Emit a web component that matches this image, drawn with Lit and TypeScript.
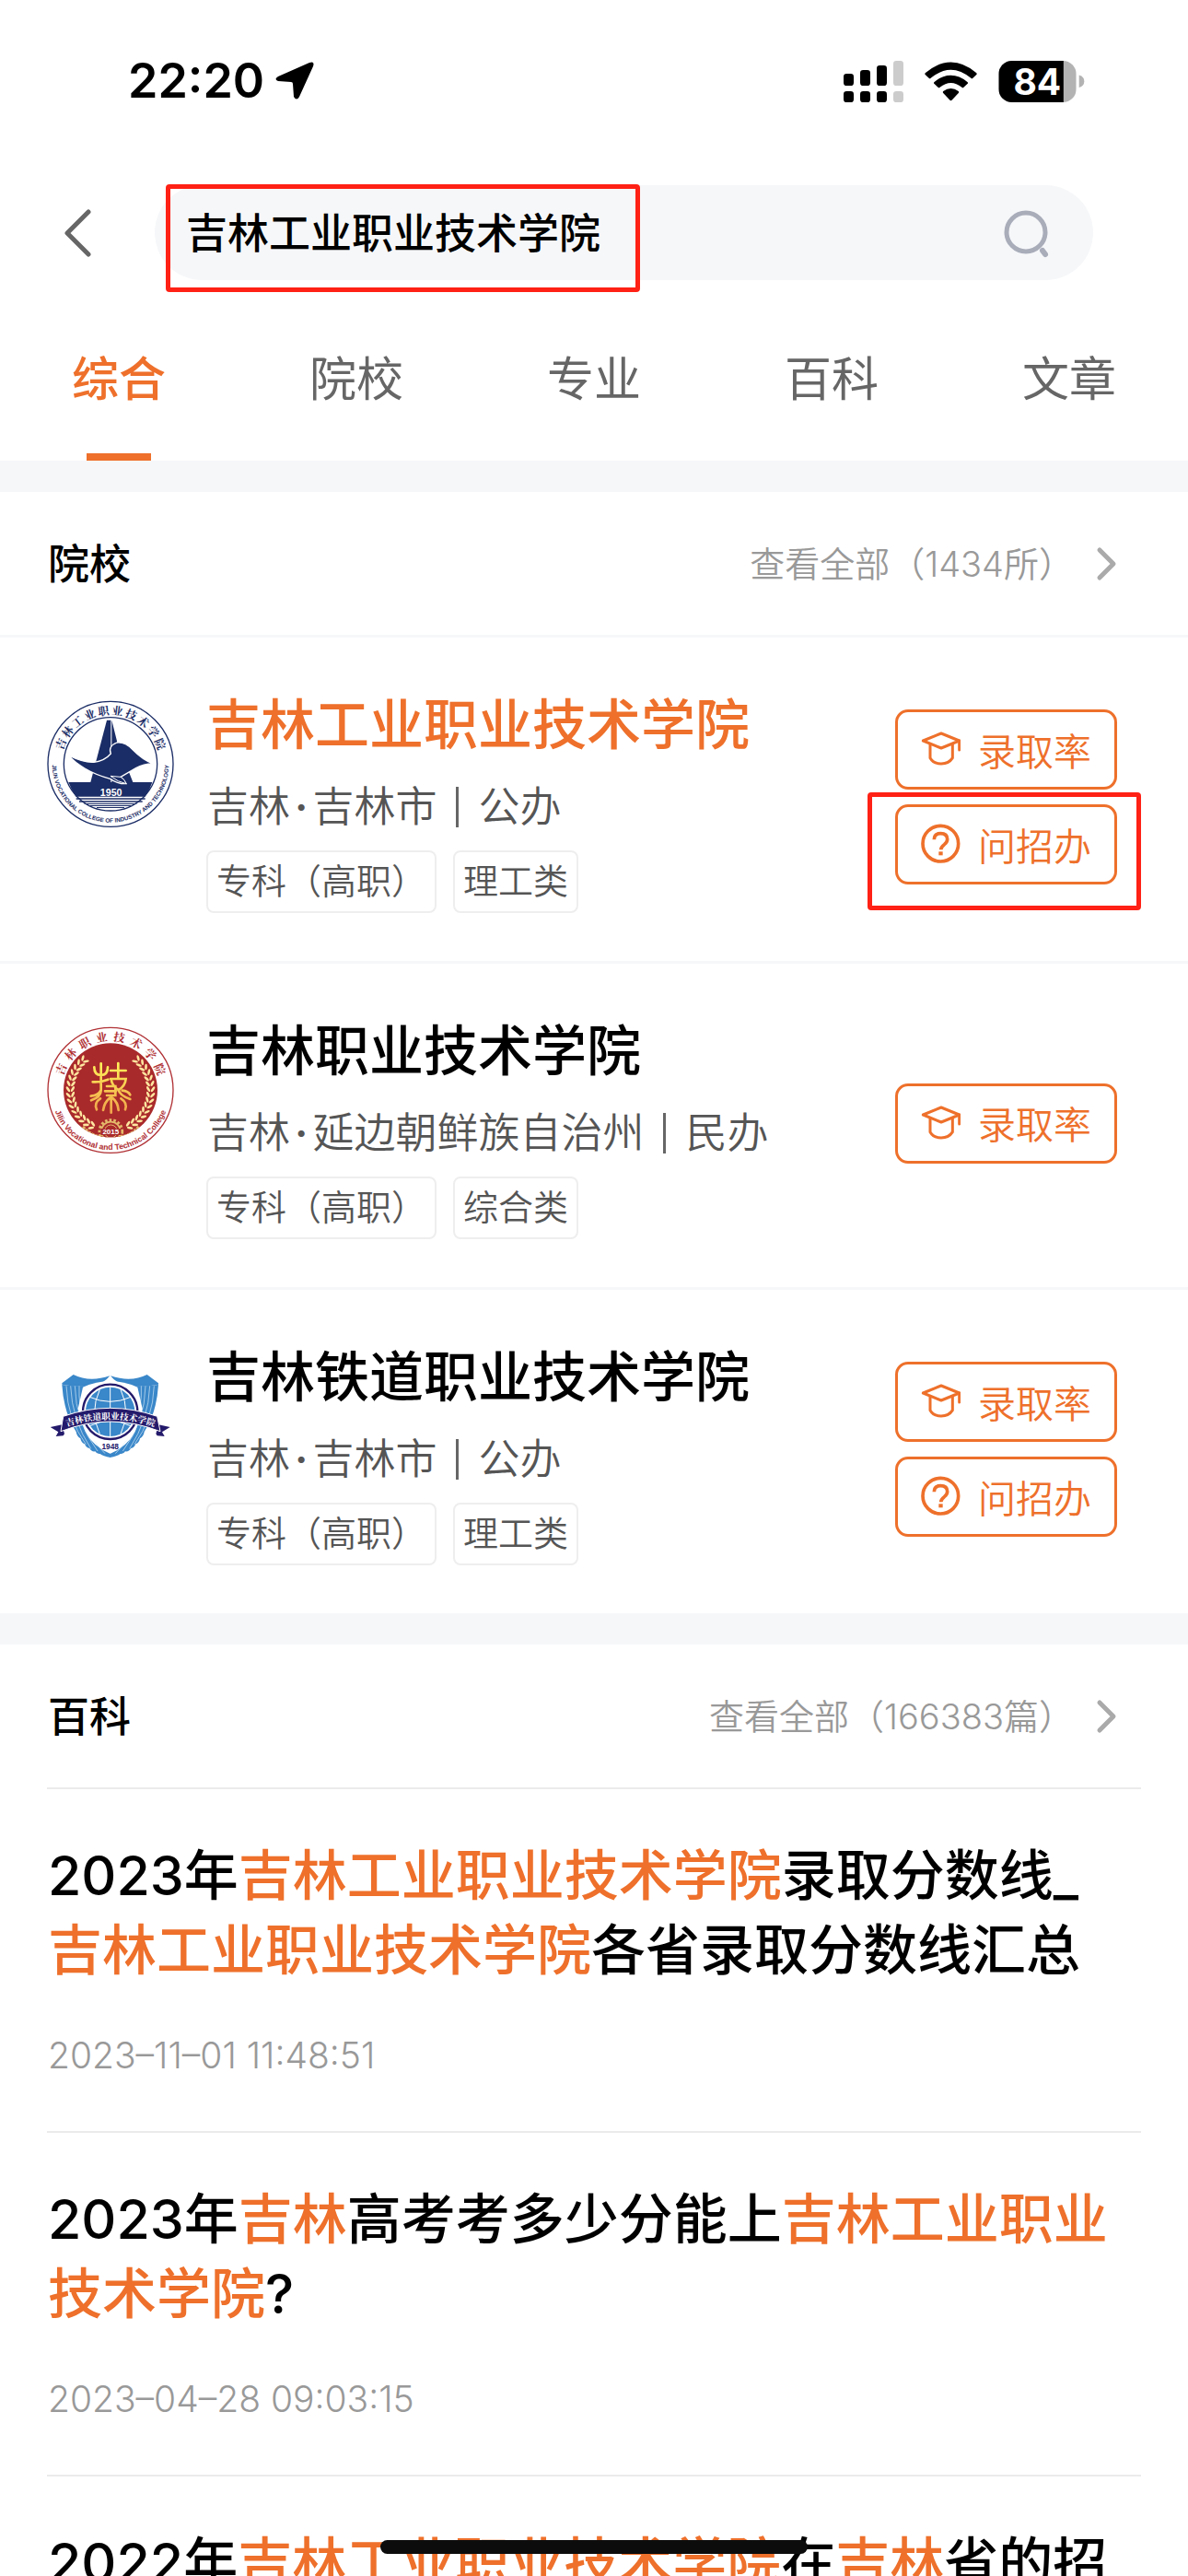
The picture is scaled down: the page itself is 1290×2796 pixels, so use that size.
import { LitElement, html, css, svg, nothing } from "lit";
import { customElement, property } from "lit/decorators.js";

type Part = string | { hit: string };

interface School {
  name: string;
  hit: boolean;
  province: string;
  city: string;
  kind: string;
  tags: string[];
  logo: string;
  ask: boolean;
  marked: boolean;
}

const SCHOOLS: School[] = [
  { name: "吉林工业职业技术学院", hit: true, province: "吉林", city: "吉林市", kind: "公办", tags: ["专科（高职）", "理工类"], logo: "industry", ask: true, marked: true },
  { name: "吉林职业技术学院", hit: false, province: "吉林", city: "延边朝鲜族自治州", kind: "民办", tags: ["专科（高职）", "综合类"], logo: "vocational", ask: false, marked: false },
  { name: "吉林铁道职业技术学院", hit: false, province: "吉林", city: "吉林市", kind: "公办", tags: ["专科（高职）", "理工类"], logo: "railway", ask: true, marked: false },
];

const ARTICLES: { title: Part[]; date: string }[] = [
  {
    title: ["2023年", { hit: "吉林工业职业技术学院" }, "录取分数线_", { hit: "吉林工业职业技术学院" }, "各省录取分数线汇总"],
    date: "2023–11–01 11:48:51",
  },
  {
    title: ["2023年", { hit: "吉林" }, "高考考多少分能上", { hit: "吉林工业职业技术学院" }, "?"],
    date: "2023–04–28 09:03:15",
  },
  {
    title: ["2022年", { hit: "吉林工业职业技术学院" }, "在", { hit: "吉林" }, "省的招"],
    date: "",
  },
];

const TABS = ["综合", "院校", "专业", "百科", "文章"];

/* Places characters evenly along the upper arc of a seal centred on 240,241. */
const ringText = (chars: string, from: number, to: number, radius: number) =>
  [...chars].map((c, i) => {
    const turn = from + ((to - from) * i) / (chars.length - 1);
    return svg`<text x="240" y=${241 - radius} text-anchor="middle" transform="rotate(${turn} 240 241)">${c}</text>`;
  });

const industryLogo = () => html`
  <svg class="logo" viewBox="33 33 414 414" role="img" aria-label="吉林工业职业技术学院">
    <defs><path id="arc" d="M55 198 A190 190 0 1 0 425 198" /></defs>
    <g fill="none" stroke="#1b2d66">
      <circle cx="240" cy="241" r="204" stroke-width="4" />
      <circle cx="240" cy="241" r="152" stroke-width="4" />
    </g>
    <g fill="#1b2d66">
      <path d="M228 98h13v202h-66z" /><path d="M244 98l18 72 51 130h-69z" />
      <path d="M103 300h273l-8 20-15 27H127l-15-27z" />
      <path d="M128 352h225v4H128zM138 361h206v4H138zM155 369h170v3H155zM172 375h136v3H172zM195 381h90v3h-90z" />
      <path d="M104 213q48 24 82 22 36-5 55-28-10-24 20-36 26-3 50 22 34 35 68 47-32 0-56 14-29 17-50 29 10 8 18 22-28 1-52-16-48-13-83-34-34-20-52-42z" stroke="#fff" stroke-width="4" />
      <path d="M240 280q25 20 51 25-4-14-18-22z" stroke="#fff" stroke-width="3" />
    </g>
    <text x="242" y="345" text-anchor="middle" class="num" font-size="32" fill="#fff">1950</text>
    <g class="brush" fill="#1b2d66" font-size="36">${ringText("吉林工业职业技术学院", -68, 68, 161)}</g>
    <text class="latin" font-size="19" fill="#1b2d66"><textPath href="#arc" startOffset="50%" text-anchor="middle">JILIN VOCATIONAL COLLEGE OF INDUSTRY AND TECHNOLOGY</textPath></text>
  </svg>`;

const wheat = () =>
  Array.from({ length: 15 }, (_, i) => {
    const turn = 24 + i * 8;
    return svg`<g transform="rotate(${turn} 240 241)">
      <ellipse cx="232" cy="364" rx="10" ry="4" transform="rotate(32 232 364)" />
      <ellipse cx="232" cy="379" rx="10" ry="4" transform="rotate(-32 232 379)" />
    </g>
    <g transform="rotate(${-turn} 240 241)">
      <ellipse cx="248" cy="364" rx="10" ry="4" transform="rotate(-32 248 364)" />
      <ellipse cx="248" cy="379" rx="10" ry="4" transform="rotate(32 248 379)" />
    </g>`;
  });

const vocationalLogo = () => html`
  <svg class="logo" viewBox="33 33 414 414" role="img" aria-label="吉林职业技术学院">
    <defs>
      <path id="arc" d="M49 215 A193 193 0 1 0 431 215" />
      <clipPath id="disc"><circle cx="240" cy="241" r="153" /></clipPath>
      <linearGradient id="gold" x1="0" y1="150" x2="0" y2="320" gradientUnits="userSpaceOnUse">
        <stop offset="0" stop-color="#fff25a" /><stop offset="1" stop-color="#efa24a" />
      </linearGradient>
    </defs>
    <circle cx="240" cy="241" r="204" fill="none" stroke="#b03034" stroke-width="4" />
    <circle cx="240" cy="241" r="153" fill="#a92a2b" />
    <g clip-path="url(#disc)">
      <g fill="#ffe7a0">${wheat()}</g>
      <circle cx="241" cy="375" r="37" fill="#a92a2b" stroke="#e3b96a" stroke-width="9" stroke-dasharray="8 6" />
      <circle cx="241" cy="375" r="31" fill="none" stroke="#e3b96a" stroke-width="5" />
      <circle cx="241" cy="375" r="21" fill="none" stroke="#e3b96a" stroke-width="3" />
      <rect x="208" y="366" width="66" height="21" fill="#a92a2b" />
      <path d="M150 360q35 34 60 30M332 360q-35 34-60 30" fill="none" stroke="#e3b96a" stroke-width="8" stroke-dasharray="9 3" />
    </g>
    <g fill="none" stroke="url(#gold)" stroke-width="8" stroke-linecap="round">
      <path d="M209 154v88q0 20-32 32M187 166q0 26 22 26t22-26M182 214q26 2 50-8M209 240q-8 18-33 20M207 268q-22 14-12 36" />
      <path d="M265 153v48M240 177h50M240 204h50q-2 24-24 36M242 204q2 22 24 36" />
      <path d="M228 228h28v30h-28M222 244h36M242 258v56M238 266q-18 14-22 40M246 266q18 14 20 40M266 240q4 18 38 30M278 242q20 2 26 14M274 268q22 14 14 36" />
    </g>
    <text x="241" y="385" text-anchor="middle" class="num" font-size="24" fill="#fff">2015</text>
    <g class="brush" fill="#b03034" font-size="37">${ringText("吉林职业技术学院", -67, 67, 161)}</g>
    <text class="latin" font-size="26" fill="#b03034"><textPath href="#arc" startOffset="50%" text-anchor="middle">Jilin Vocational and Technical College</textPath></text>
  </svg>`;

const shieldHalf = () => svg`
  <path d="M82 97l37-28q52 26 119 4-18 24-52 31-54 8-104-3z" fill="#3a87c9" />
  <path d="M82 102q40 6 80 3-32 90-4 150 25 48 82 72v12q-24-4-34-12-10 2-16-8-12 2-18-10-12-2-16-14-12-4-14-18-12-6-14-22-40-60-46-153z" fill="#3a87c9" />
  <path d="M96 106q4 110 64 190M110 106q4 110 66 204M124 106q2 118 74 212M138 106q-6 130 84 220" fill="none" stroke="#d8ebf8" stroke-width="2" />`;

const railwayLogo = () => html`
  <svg class="logo" viewBox="33 -3 414 414" role="img" aria-label="吉林铁道职业技术学院">
    ${shieldHalf()}
    <g transform="matrix(-1 0 0 1 478 0)">${shieldHalf()}</g>
    <path d="M150 110q89-40 178 0l16 70q-20 100-105 142-85-42-105-142z" fill="#fff" />
    <circle cx="239" cy="190" r="89" fill="#fff" stroke="#241a6b" stroke-width="7" />
    <circle cx="239" cy="190" r="80" fill="#3a87c9" />
    <g fill="none" stroke="#fff" stroke-width="3">
      <path d="M239 110v160M205 118q-34 72 0 144M273 118q34 72 0 144M172 142q67 30 134 0M172 236q67-32 134 0M159 190h160" />
    </g>
    <path d="M44 240l38-8 8 30-4 6-24 2 8-14zM434 240l-38-8-8 30 4 6 24 2-8-14z" fill="#241a6b" />
    <path d="M86 205q153-54 306 0l10 49q-163-64-324 0z" fill="#241a6b" stroke="#fff" stroke-width="3" />
    <defs><path id="band" d="M84 243 Q239 187 396 243" /></defs>
    <text class="brush" font-size="29" fill="#fff"><textPath href="#band" startOffset="50%" text-anchor="middle">吉林铁道职业技术学院</textPath></text>
    <text x="239" y="311" text-anchor="middle" class="num" font-size="25" fill="#241a6b">1948</text>
  </svg>`;

const capIcon = html`
  <svg class="act-icon" viewBox="211 125 129 129" aria-hidden="true">
    <g fill="none" stroke="currentColor" stroke-width="9" stroke-linejoin="round" stroke-linecap="round">
      <path d="M218 164l59-24 59 24-59 24z" />
      <path d="M336 164v30" />
      <path d="M241 176v44q11 19 36 19t37-19v-44" />
    </g>
  </svg>`;

const askIcon = html`
  <svg class="act-icon" viewBox="211 434 129 129" aria-hidden="true">
    <g fill="none" stroke="currentColor" stroke-width="11">
      <circle cx="275" cy="499" r="58" />
      <path d="M254 486q0-20 21-20 22 0 22 19 0 9-10 17-11 8-11 17" />
    </g>
    <rect x="269" y="525" width="13" height="12" fill="currentColor" />
  </svg>`;

const base = css`
  :host {
    display: block;
    --accent: #ee702b;
    --band: #f6f7f9;
    --mark: #ff2115;
    --sans: Inter, "Noto Sans CJK SC", sans-serif;
    font-family: var(--sans);
  }
  * { box-sizing: border-box; }
  button { font: inherit; color: inherit; background: none; border: 0; padding: 0; margin: 0; }
  a { color: inherit; text-decoration: none; }
  h2, h3, p { margin: 0; font-weight: inherit; }
  svg { display: block; flex: none; }
`;

@customElement("status-bar")
export class StatusBar extends LitElement {
  static styles = [
    base,
    css`
      .bar { display: flex; align-items: center; justify-content: space-between; height: 172px; padding: 4px 112px 0 139px; }
      .left { display: flex; align-items: center; gap: 12px; font-size: 52px; line-height: 60px; font-weight: 600; }
      .right { display: flex; align-items: center; gap: 23px; }
      .arrow { width: 42px; height: 42px; }
      .signal { width: 65px; height: 45px; }
      .wifi { width: 57px; height: 43px; }
      .battery { width: 94px; height: 45px; }
      .level { font-family: Inter, sans-serif; font-weight: 700; font-size: 118px; }
    `,
  ];
  render() {
    return html`
      <div class="bar">
        <div class="left">
          <span>22:20</span>
          <svg class="arrow" viewBox="0 0 42 42" aria-hidden="true"><path d="M37 1Q43-1 41 5L26 38q-3 5-6 0l-1-14q0-2-2-2L3 21q-5-2 0-5z" /></svg>
        </div>
        <div class="right">
          <svg class="signal" viewBox="48 72 195 135" aria-hidden="true">
            <rect x="48" y="114" width="33" height="39" rx="10" /><rect x="102" y="102" width="33" height="51" rx="10" />
            <rect x="156" y="87" width="33" height="66" rx="10" /><rect x="210" y="72" width="33" height="81" rx="10" fill="#ccc" />
            <rect x="48" y="171" width="33" height="36" rx="10" /><rect x="102" y="171" width="33" height="36" rx="10" />
            <rect x="156" y="171" width="33" height="36" rx="10" /><rect x="210" y="171" width="33" height="36" rx="10" fill="#ccc" />
          </svg>
          <svg class="wifi" viewBox="312 74 172 128" aria-hidden="true">
            <path d="M314 110q84-70 168 0 2 3 0 5l-12 12q-3 3-6 0-66-55-132 0-3 3-6 0l-12-12q-2-2 0-5z" />
            <path d="M343 140q55-44 110 0 2 3 0 5l-13 12q-3 3-6 0-36-29-72 0-3 3-6 0l-13-12q-2-2 0-5z" />
            <path d="M373 170q25-18 50 0 3 3 0 6l-22 23q-3 3-6 0l-22-23q-3-3 0-6z" />
          </svg>
          <svg class="battery" viewBox="552 72 282 136" role="img" aria-label="84">
            <defs><clipPath id="cell"><rect x="552" y="72" width="255" height="136" rx="44" /></clipPath></defs>
            <g clip-path="url(#cell)">
              <rect x="552" y="72" width="255" height="136" fill="#b3b3b3" />
              <rect x="552" y="72" width="213" height="136" />
            </g>
            <path d="M816 119q17 5 17 20t-17 21z" fill="#b3b3b3" />
            <text class="level" x="679" y="183" text-anchor="middle" fill="#fff">84</text>
          </svg>
        </div>
      </div>`;
  }
}

@customElement("search-header")
export class SearchHeader extends LitElement {
  static styles = [
    base,
    css`
      .row { display: flex; padding: 29px 103px 29px 0; }
      .back { width: 168px; padding-left: 68px; flex: none; }
      .back svg { width: 32px; height: 54px; }
      .field { position: relative; flex: 1; display: flex; align-items: center; height: 103px; padding: 0 46px 0 34px; border-radius: 52px; background: var(--band); }
      .input { flex: 1; min-width: 0; border: 0; padding: 2px 0 0; background: none; outline: 0; font-family: var(--sans); font-size: 45px; line-height: 60px; font-weight: 450; color: #000; }
      .find svg { width: 52px; height: 54px; }
      .note { position: absolute; left: 12px; top: -1px; width: 515px; height: 117px; border: 5px solid var(--mark); border-radius: 4px; pointer-events: none; }
      .tabs { display: flex; }
      .tab { flex: 1; display: flex; flex-direction: column; align-items: center; gap: 50px; padding-top: 49px; font-size: 51px; line-height: 60px; color: #666; }
      .tab::after { content: ""; width: 70px; height: 8px; }
      .on { color: var(--accent); font-weight: 500; }
      .on::after { background: var(--accent); }
    `,
  ];
  render() {
    return html`
      <form class="row" @submit=${(e: Event) => e.preventDefault()}>
        <button class="back" type="button" aria-label="返回">
          <svg viewBox="0 0 32 54"><path d="M28 4L5 27l23 23" fill="none" stroke="#666" stroke-width="5" stroke-linecap="round" stroke-linejoin="round" /></svg>
        </button>
        <div class="field">
          <input class="input" type="text" aria-label="搜索" .value=${"吉林工业职业技术学院"} />
          <button class="find" type="submit" aria-label="搜索">
            <svg viewBox="0 0 52 54" fill="none" stroke="#a9adba" stroke-width="5" stroke-linecap="round"><circle cx="25" cy="26" r="21" /><path d="M43 46l3 4" stroke-width="6" /></svg>
          </button>
          <div class="note"></div>
        </div>
      </form>
      <nav class="tabs" role="tablist">
        ${TABS.map((t, i) => html`<button class="tab ${i ? "" : "on"}" role="tab" aria-selected=${i === 0}>${t}</button>`)}
      </nav>`;
  }
}

@customElement("section-head")
export class SectionHead extends LitElement {
  @property() label = "";
  @property() more = "";
  static styles = [
    base,
    css`
      .head { display: flex; align-items: center; justify-content: space-between; height: 155px; padding: 0 77px 0 52px; }
      .title { padding-top: 3px; font-size: 45px; line-height: 60px; font-weight: 500; }
      .more { display: flex; align-items: center; gap: 24px; font-size: 38px; line-height: 60px; font-weight: 350; color: #999; }
      .more svg { width: 23px; height: 38px; }
    `,
  ];
  render() {
    return html`
      <div class="head">
        <h2 class="title">${this.label}</h2>
        <a class="more" href="#">${this.more}
          <svg viewBox="0 0 23 38" aria-hidden="true"><path d="M4 4l15 15L4 34" fill="none" stroke="#aaa" stroke-width="5" stroke-linecap="round" stroke-linejoin="round" /></svg>
        </a>
      </div>`;
  }
}

@customElement("school-row")
export class SchoolRow extends LitElement {
  @property({ attribute: false }) school!: School;
  static styles = [
    base,
    css`
      .row { display: flex; padding: 53px 77px 52px 51px; }
      .logo { width: 138px; height: 138px; margin-top: 15px; }
      .info { flex: 1; min-width: 0; padding-left: 35px; }
      .name { font-size: 59px; line-height: 84px; font-weight: 500; color: #000; }
      .hit { color: var(--accent); }
      .meta { display: flex; align-items: center; gap: 21px; margin-top: 17px; padding-left: 1px; font-size: 45px; line-height: 60px; font-weight: 350; color: #555; }
      .dot { padding: 0 5px; font-weight: 600; }
      .rule { width: 3px; height: 44px; background: #666; }
      .tags { display: flex; gap: 18px; margin-top: 17px; }
      .tag { height: 68px; padding: 0 9px; border: 2px solid #eee; border-radius: 8px; font-size: 38px; line-height: 62px; font-weight: 350; color: #555; }
      .actions { display: flex; flex-direction: column; justify-content: center; gap: 16px; padding-bottom: 6px; }
      .slot { position: relative; }
      .act { display: flex; align-items: center; gap: 19px; height: 87px; padding: 0 25px 2px; border: 3px solid var(--accent); border-radius: 14px; font-size: 41px; font-weight: 350; color: var(--accent); }
      .act-icon { width: 43px; height: 43px; }
      .note { position: absolute; left: -30px; top: -13px; width: 297px; height: 128px; border: 5px solid var(--mark); border-radius: 4px; pointer-events: none; }
      .brush { font-family: "Noto Serif CJK SC", "Noto Sans CJK SC", serif; font-weight: 700; }
      .latin { font-family: "Liberation Sans", sans-serif; font-weight: 700; }
      .num { font-family: "Liberation Sans", sans-serif; font-weight: 700; }
    `,
  ];
  render() {
    const s = this.school;
    const logo = s.logo === "industry" ? industryLogo() : s.logo === "vocational" ? vocationalLogo() : railwayLogo();
    return html`
      <article class="row">
        ${logo}
        <div class="info">
          <h3 class="name ${s.hit ? "hit" : ""}">${s.name}</h3>
          <p class="meta"><span>${s.province}<span class="dot">·</span>${s.city}</span><span class="rule"></span><span>${s.kind}</span></p>
          <div class="tags">${s.tags.map((t) => html`<span class="tag">${t}</span>`)}</div>
        </div>
        <div class="actions">
          <button class="act">${capIcon}<span>录取率</span></button>
          ${s.ask
            ? html`<div class="slot"><button class="act">${askIcon}<span>问招办</span></button>${s.marked ? html`<div class="note"></div>` : nothing}</div>`
            : nothing}
        </div>
      </article>`;
  }
}

@customElement("app-root")
export class AppRoot extends LitElement {
  static styles = [
    base,
    css`
      .page { position: relative; height: 100vh; overflow: hidden; background: #fff; color: #000; }
      .band { height: 34px; background: var(--band); }
      .schools { border-top: 3px solid var(--band); }
      .schools school-row + school-row { border-top: 3px solid var(--band); }
      .articles { margin: 0 51px; }
      .article { border-top: 2px solid #ebebeb; padding: 53px 27px 59px 1px; }
      .headline { display: block; font-size: 59px; line-height: 81px; font-weight: 450; }
      .hit { color: var(--accent); }
      .date { display: block; margin-top: 51px; font-size: 39px; line-height: 46px; font-weight: 300; color: #999; }
      .home { position: absolute; left: 50%; bottom: 24px; width: 36%; height: 15px; margin-left: -18%; border-radius: 8px; background: #0c0c0c; }
    `,
  ];
  render() {
    return html`
      <main class="page">
        <status-bar></status-bar>
        <search-header></search-header>
        <div class="band"></div>
        <section>
          <section-head label="院校" more="查看全部（1434所）"></section-head>
          <div class="schools">${SCHOOLS.map((s) => html`<school-row .school=${s}></school-row>`)}</div>
        </section>
        <div class="band"></div>
        <section>
          <section-head label="百科" more="查看全部（166383篇）"></section-head>
          <div class="articles">
            ${ARTICLES.map(
              (a) => html`<article class="article">
                <a class="headline" href="#">${a.title.map((p) => (typeof p === "string" ? p : html`<span class="hit">${p.hit}</span>`))}</a>
                ${a.date ? html`<time class="date">${a.date}</time>` : nothing}
              </article>`
            )}
          </div>
        </section>
        <div class="home"></div>
      </main>`;
  }
}
